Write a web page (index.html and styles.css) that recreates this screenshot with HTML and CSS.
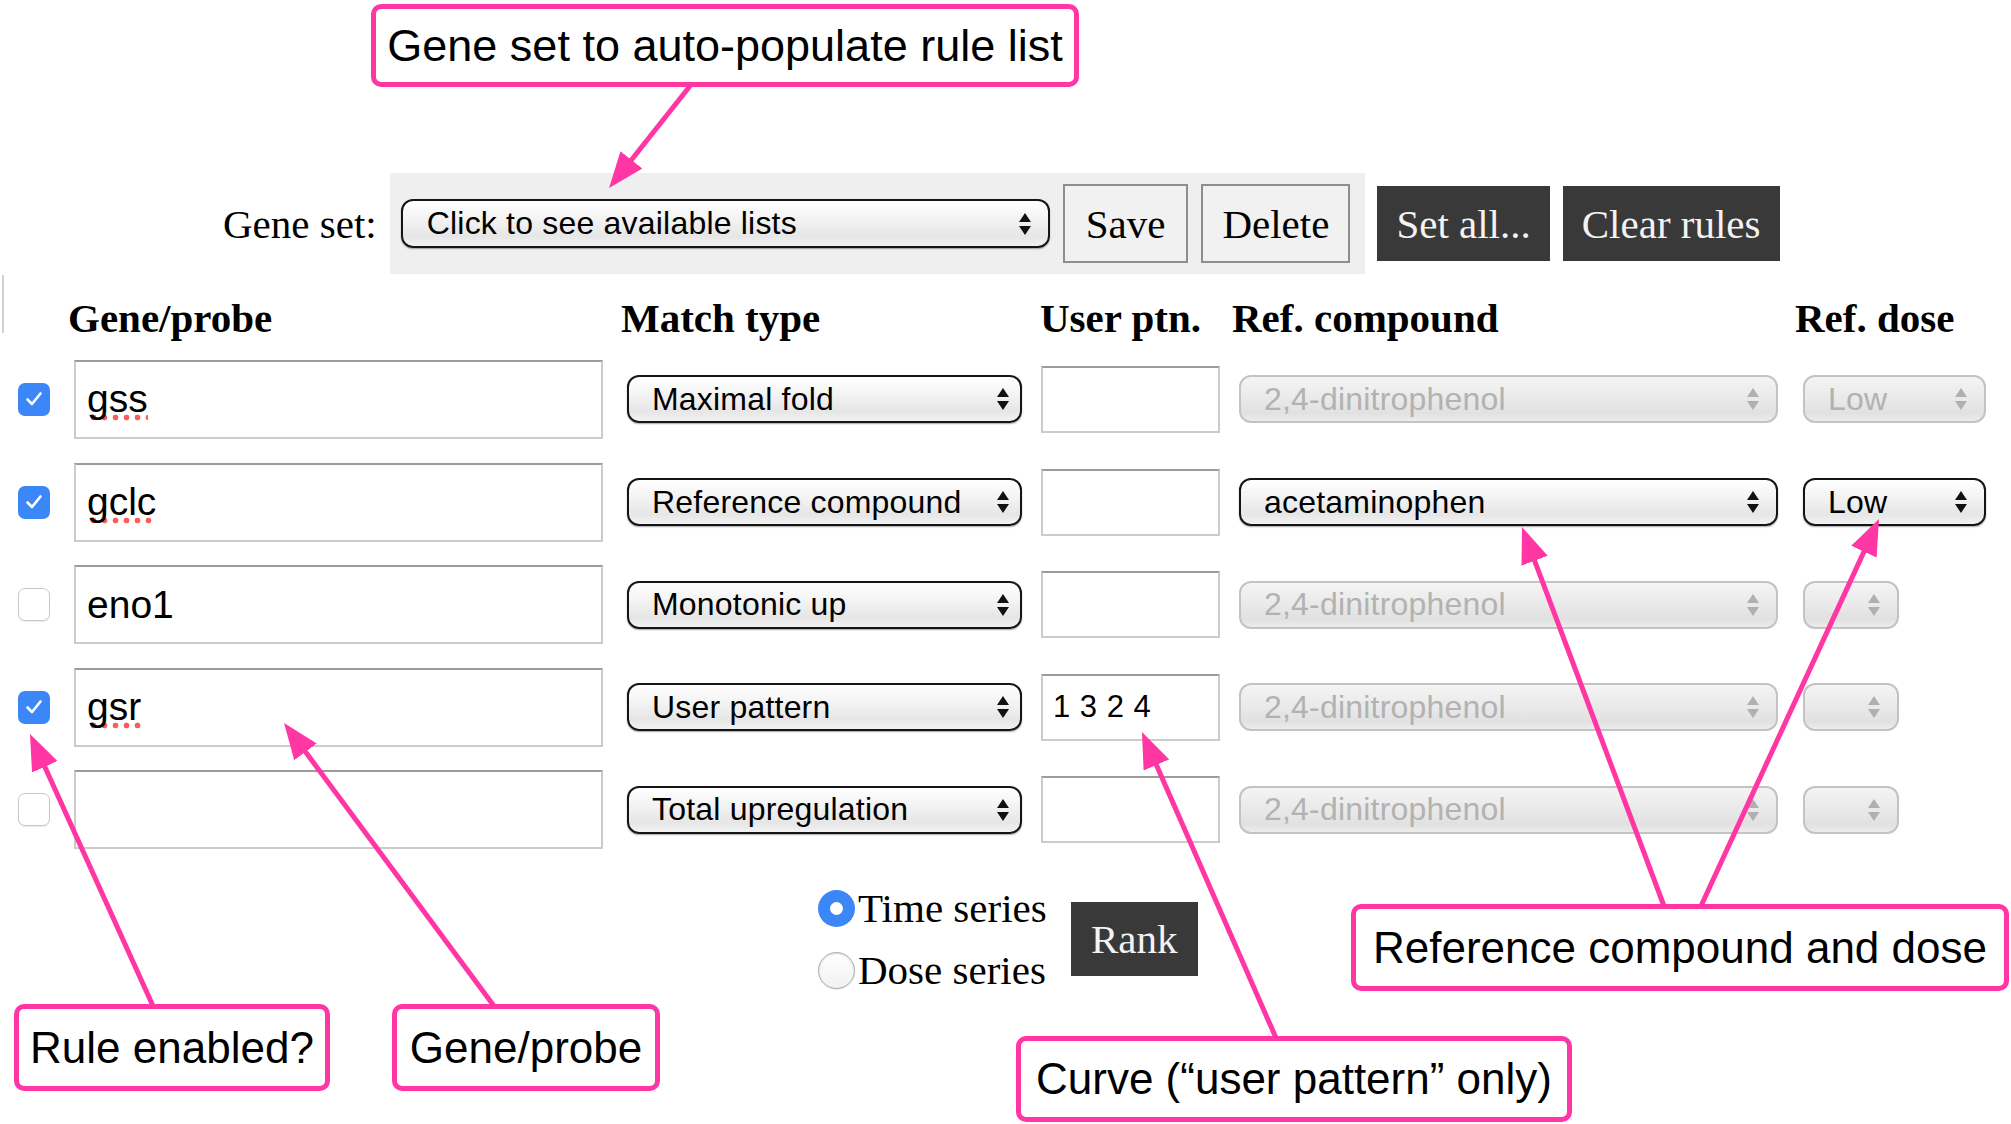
FILE: index.html
```html
<!DOCTYPE html>
<html lang="en">
<head>
<meta charset="utf-8">
<title>Gene rules</title>
<link rel="stylesheet" href="styles.css">
</head>
<body>
<div class="page">
  <div class="genebar">
    <span class="gs-label">Gene set:</span>
    <div class="gs-panel">
      <div class="sel gsel"><span>Click to see available lists</span><svg class="updown" width="12" height="22" viewBox="0 0 12 22"><path d="M0 9 L6 0 L12 9 Z M0 13 L6 22 L12 13 Z" fill="currentColor"/></svg></div>
      <button class="btn-light save">Save</button>
      <button class="btn-light">Delete</button>
    </div>
    <button class="btn-dark">Set all...</button>
    <button class="btn-dark">Clear rules</button>
  </div>

  <div class="rules">
    <div class="th edge"></div>
    <div class="th">Gene/probe</div>
    <div class="th">Match type</div>
    <div class="th">User ptn.</div>
    <div class="th">Ref. compound</div>
    <div class="th">Ref. dose</div>

    <div class="cb on"><svg width="20" height="20" viewBox="0 0 20 20"><path d="M3.5 10.5 L8 15 L16.5 4.5" fill="none" stroke="#fff" stroke-width="2.6" stroke-linecap="round" stroke-linejoin="round"/></svg></div>
    <div class="gene"><span class="spell">gss</span></div>
    <div class="sel match"><span>Maximal fold</span><svg class="updown" width="12" height="22" viewBox="0 0 12 22"><path d="M0 9 L6 0 L12 9 Z M0 13 L6 22 L12 13 Z" fill="currentColor"/></svg></div>
    <div class="ptn"></div>
    <div class="sel refc dis"><span>2,4-dinitrophenol</span><svg class="updown" width="12" height="22" viewBox="0 0 12 22"><path d="M0 9 L6 0 L12 9 Z M0 13 L6 22 L12 13 Z" fill="currentColor"/></svg></div>
    <div class="sel dose dis"><span>Low</span><svg class="updown" width="12" height="22" viewBox="0 0 12 22"><path d="M0 9 L6 0 L12 9 Z M0 13 L6 22 L12 13 Z" fill="currentColor"/></svg></div>

    <div class="cb on"><svg width="20" height="20" viewBox="0 0 20 20"><path d="M3.5 10.5 L8 15 L16.5 4.5" fill="none" stroke="#fff" stroke-width="2.6" stroke-linecap="round" stroke-linejoin="round"/></svg></div>
    <div class="gene"><span class="spell">gclc</span></div>
    <div class="sel match"><span>Reference compound</span><svg class="updown" width="12" height="22" viewBox="0 0 12 22"><path d="M0 9 L6 0 L12 9 Z M0 13 L6 22 L12 13 Z" fill="currentColor"/></svg></div>
    <div class="ptn"></div>
    <div class="sel refc"><span>acetaminophen</span><svg class="updown" width="12" height="22" viewBox="0 0 12 22"><path d="M0 9 L6 0 L12 9 Z M0 13 L6 22 L12 13 Z" fill="currentColor"/></svg></div>
    <div class="sel dose"><span>Low</span><svg class="updown" width="12" height="22" viewBox="0 0 12 22"><path d="M0 9 L6 0 L12 9 Z M0 13 L6 22 L12 13 Z" fill="currentColor"/></svg></div>

    <div class="cb off"></div>
    <div class="gene"><span>eno1</span></div>
    <div class="sel match"><span>Monotonic up</span><svg class="updown" width="12" height="22" viewBox="0 0 12 22"><path d="M0 9 L6 0 L12 9 Z M0 13 L6 22 L12 13 Z" fill="currentColor"/></svg></div>
    <div class="ptn"></div>
    <div class="sel refc dis"><span>2,4-dinitrophenol</span><svg class="updown" width="12" height="22" viewBox="0 0 12 22"><path d="M0 9 L6 0 L12 9 Z M0 13 L6 22 L12 13 Z" fill="currentColor"/></svg></div>
    <div class="sel dose short dis"><span></span><svg class="updown" width="12" height="22" viewBox="0 0 12 22"><path d="M0 9 L6 0 L12 9 Z M0 13 L6 22 L12 13 Z" fill="currentColor"/></svg></div>

    <div class="cb on"><svg width="20" height="20" viewBox="0 0 20 20"><path d="M3.5 10.5 L8 15 L16.5 4.5" fill="none" stroke="#fff" stroke-width="2.6" stroke-linecap="round" stroke-linejoin="round"/></svg></div>
    <div class="gene"><span class="spell">gsr</span></div>
    <div class="sel match"><span>User pattern</span><svg class="updown" width="12" height="22" viewBox="0 0 12 22"><path d="M0 9 L6 0 L12 9 Z M0 13 L6 22 L12 13 Z" fill="currentColor"/></svg></div>
    <div class="ptn"><span>1 3 2 4</span></div>
    <div class="sel refc dis"><span>2,4-dinitrophenol</span><svg class="updown" width="12" height="22" viewBox="0 0 12 22"><path d="M0 9 L6 0 L12 9 Z M0 13 L6 22 L12 13 Z" fill="currentColor"/></svg></div>
    <div class="sel dose short dis"><span></span><svg class="updown" width="12" height="22" viewBox="0 0 12 22"><path d="M0 9 L6 0 L12 9 Z M0 13 L6 22 L12 13 Z" fill="currentColor"/></svg></div>

    <div class="cb off"></div>
    <div class="gene"><span></span></div>
    <div class="sel match"><span>Total upregulation</span><svg class="updown" width="12" height="22" viewBox="0 0 12 22"><path d="M0 9 L6 0 L12 9 Z M0 13 L6 22 L12 13 Z" fill="currentColor"/></svg></div>
    <div class="ptn"></div>
    <div class="sel refc dis"><span>2,4-dinitrophenol</span><svg class="updown" width="12" height="22" viewBox="0 0 12 22"><path d="M0 9 L6 0 L12 9 Z M0 13 L6 22 L12 13 Z" fill="currentColor"/></svg></div>
    <div class="sel dose short dis"><span></span><svg class="updown" width="12" height="22" viewBox="0 0 12 22"><path d="M0 9 L6 0 L12 9 Z M0 13 L6 22 L12 13 Z" fill="currentColor"/></svg></div>
  </div>

  <div class="series">
    <div class="radios">
      <div class="radio-row"><span class="radio on"></span>Time series</div>
      <div class="radio-row"><span class="radio off"></span>Dose series</div>
    </div>
    <button class="btn-dark rank">Rank</button>
  </div>

  <svg class="arrows" width="2011" height="1124" viewBox="0 0 2011 1124">
    <defs>
      <marker id="ah" viewBox="0 0 36 28" refX="26" refY="14" markerWidth="36" markerHeight="28" markerUnits="userSpaceOnUse" orient="auto">
        <path d="M0 0 L36 14 L0 28 Z" fill="#ff36a4"/>
      </marker>
    </defs>
    <g stroke="#ff36a4" stroke-width="5" fill="none" marker-end="url(#ah)">
      <line x1="690" y1="86" x2="615.3" y2="180.2"/>
      <line x1="153" y1="1006" x2="34.1" y2="743.1"/>
      <line x1="494" y1="1006" x2="290" y2="731"/>
      <line x1="1276" y1="1038" x2="1146" y2="741.2"/>
      <line x1="1664" y1="906" x2="1525.5" y2="536.4"/>
      <line x1="1701" y1="906" x2="1874.8" y2="528.1"/>
    </g>
  </svg>

  <div class="callout c-top">Gene set to auto-populate rule list</div>
  <div class="callout c-rule">Rule enabled?</div>
  <div class="callout c-gene">Gene/probe</div>
  <div class="callout c-curve">Curve (“user pattern” only)</div>
  <div class="callout c-ref">Reference compound and dose</div>
</div>
</body>
</html>
```
FILE: styles.css
```css
* { box-sizing: border-box; }

html, body { margin: 0; padding: 0; }

body {
  width: 2011px;
  height: 1124px;
  overflow: hidden;
  background: #ffffff;
  color: #000;
  font-family: "Liberation Serif", "Times New Roman", serif;
}

.page {
  position: relative;
  width: 2011px;
  height: 1124px;
  padding: 173px 0 0 2px;
}

/* ---------- gene set bar ---------- */
.genebar {
  display: flex;
  align-items: center;
  height: 101px;
  margin-left: 221px;
}

.gs-label {
  font-size: 41px;
  margin-right: 13px;
  white-space: nowrap;
}

.gs-panel {
  display: flex;
  align-items: center;
  gap: 13px;
  height: 101px;
  padding: 0 15px 0 11px;
  background: #efefef;
}

.btn-light {
  height: 79px;
  padding: 0 19px;
  border: 2px solid #8e8e8e;
  background: #f1f1f1;
  color: #000;
  font-family: "Liberation Serif", "Times New Roman", serif;
  font-size: 41px;
  margin: 0;
}

.btn-light.save { padding: 0 21px; }

.btn-dark {
  height: 75px;
  padding: 0 19px;
  border: 0;
  background: #393939;
  color: #f3f3f3;
  font-family: "Liberation Serif", "Times New Roman", serif;
  font-size: 41px;
  margin: 0 0 0 12px;
}

.btn-dark + .btn-dark { margin-left: 13px; }

/* ---------- pseudo selects ---------- */
.sel {
  display: flex;
  align-items: center;
  height: 48px;
  border: 2px solid #151515;
  border-radius: 12px;
  background: linear-gradient(#ffffff 0%, #f3f3f3 40%, #e6e6e6 78%, #f2f2f2 100%);
  box-shadow: 0 1px 1.5px rgba(0, 0, 0, 0.35);
  font-family: "Liberation Sans", Arial, sans-serif;
  font-size: 32px;
  letter-spacing: 0.2px;
  color: #000;
  padding: 0 17px 0 23px;
}

.sel span {
  flex: 1;
  white-space: nowrap;
  overflow: hidden;
}

.updown { flex: none; color: #111; display: block; }

.sel.dis {
  border-color: #c3c3c3;
  color: #b2b2b2;
  background: linear-gradient(#f4f4f4 0%, #e9e9e9 50%, #e1e1e1 82%, #ececec 100%);
  box-shadow: none;
}

.sel.dis .updown { color: #b0b0b0; }

.gsel { width: 649px; height: 49px; padding-left: 24px; }

/* ---------- rules grid ---------- */
.rules {
  display: grid;
  grid-template-columns: 66px 553px 419px 192px 563px 1fr;
  grid-template-rows: 42.4px repeat(5, 79px);
  row-gap: 23.6px;
  align-items: center;
  margin-top: 20px;
}

.th {
  align-self: start;
  font-weight: bold;
  font-size: 41px;
  line-height: 48px;
  white-space: nowrap;
}

.th.edge {
  width: 0;
  height: 58px;
  margin-top: -19px;
  border-left: 2px solid #d0d0d0;
}

.cb {
  width: 32px;
  height: 33px;
  margin-left: 16px;
  border-radius: 7px;
  display: flex;
  align-items: center;
  justify-content: center;
}

.cb.on { background: #3b87f7; }

.cb.off {
  background: #fff;
  border: 1.5px solid #c8c8c8;
  box-shadow: 0 1px 1px rgba(0, 0, 0, 0.08);
}

.gene {
  width: 529px;
  height: 79px;
  margin-left: 6px;
  border: 2px solid #cbcbcb;
  border-top-color: #9c9c9c;
  padding-left: 11px;
  display: flex;
  align-items: center;
  font-family: "Liberation Sans", Arial, sans-serif;
  font-size: 39px;
}

.spell {
  background-image: radial-gradient(circle at center, rgba(255, 72, 72, 0.9) 0 2.6px, rgba(255, 72, 72, 0) 3.2px);
  background-size: 11px 7px;
  background-repeat: repeat-x;
  background-position: 1px 100%;
}

.match { width: 395px; margin-left: 6px; padding-right: 11px; }

.ptn {
  width: 179px;
  height: 67px;
  margin-left: 1px;
  border: 2px solid #cbcbcb;
  border-top-color: #9c9c9c;
  padding-left: 10px;
  display: flex;
  align-items: center;
  font-family: "Liberation Sans", Arial, sans-serif;
  font-size: 31px;
  letter-spacing: 0.5px;
}

.refc { width: 539px; margin-left: 7px; }

.dose { width: 183px; margin-left: 8px; }

.dose.short { width: 96px; }

/* ---------- series / rank ---------- */
.series {
  display: flex;
  align-items: center;
  margin: 28px 0 0 816px;
}

.radios {
  display: flex;
  flex-direction: column;
}

.radio-row {
  display: flex;
  align-items: center;
  gap: 3px;
  height: 62px;
  font-size: 41px;
  white-space: nowrap;
}

.radio {
  flex: none;
  width: 37px;
  height: 37px;
  border-radius: 50%;
}

.radio.on {
  background: #3b87f7;
  display: flex;
  align-items: center;
  justify-content: center;
}

.radio.on::after {
  content: "";
  width: 13px;
  height: 13px;
  border-radius: 50%;
  background: #fff;
}

.radio.off {
  background: linear-gradient(#ffffff, #f1f1f1);
  border: 1.5px solid #ababab;
  box-shadow: inset 0 1px 2px rgba(0, 0, 0, 0.15), 0 1px 1px rgba(0, 0, 0, 0.1);
}

.btn-dark.rank {
  width: 127px;
  height: 74px;
  padding: 0;
  margin-left: 24px;
}

/* ---------- annotations ---------- */
.arrows {
  position: absolute;
  left: 0;
  top: 0;
  pointer-events: none;
}

.callout {
  position: absolute;
  display: flex;
  align-items: center;
  justify-content: center;
  border: 5px solid #ff36a4;
  border-radius: 10px;
  background: #fff;
  font-family: "Liberation Sans", Arial, sans-serif;
  font-size: 44px;
  color: #000;
  white-space: nowrap;
}

.c-top { left: 371px; top: 4px; width: 708px; height: 83px; font-size: 45px; }
.c-rule { left: 14px; top: 1004px; width: 316px; height: 87px; }
.c-gene { left: 392px; top: 1004px; width: 268px; height: 87px; }
.c-curve { left: 1016px; top: 1036px; width: 556px; height: 86px; }
.c-ref { left: 1351px; top: 904px; width: 658px; height: 87px; }
```
